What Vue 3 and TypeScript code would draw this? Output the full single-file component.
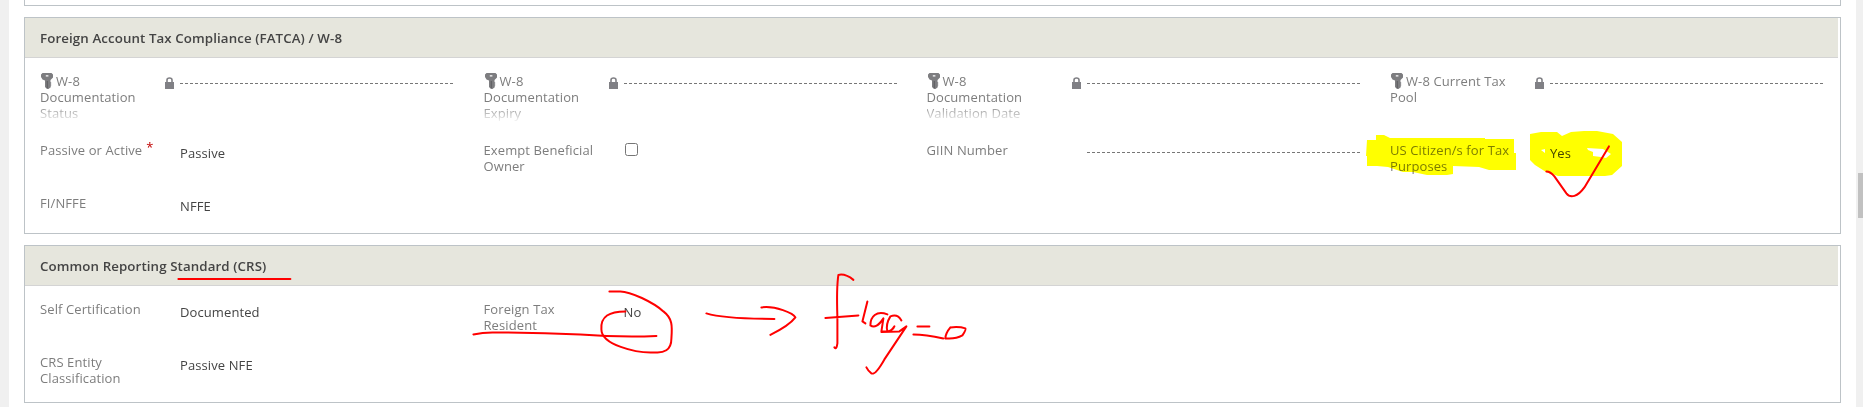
<script setup lang="ts">
interface Field {
  label: string[]
  value?: string
  kind: 'text' | 'empty' | 'checkbox'
  secured?: boolean
  required?: boolean
}
interface Section {
  title: string
  rows: (Field | null)[][]
}

const sections: Section[] = [
  {
    title: 'Foreign Account Tax Compliance (FATCA) / W-8',
    rows: [
      [
        { label: ['W-8', 'Documentation', 'Status'], kind: 'empty', secured: true },
        { label: ['W-8', 'Documentation', 'Expiry'], kind: 'empty', secured: true },
        { label: ['W-8', 'Documentation', 'Validation Date'], kind: 'empty', secured: true },
        { label: ['W-8 Current Tax', 'Pool'], kind: 'empty', secured: true },
      ],
      [
        { label: ['Passive or Active'], kind: 'text', value: 'Passive', required: true },
        { label: ['Exempt Beneficial', 'Owner'], kind: 'checkbox' },
        { label: ['GIIN Number'], kind: 'empty' },
        { label: ['US Citizen/s for Tax', 'Purposes'], kind: 'text', value: 'Yes' },
      ],
      [{ label: ['FI/NFFE'], kind: 'text', value: 'NFFE' }, null, null, null],
    ],
  },
  {
    title: 'Common Reporting Standard (CRS)',
    rows: [
      [
        { label: ['Self Certification'], kind: 'text', value: 'Documented' },
        { label: ['Foreign Tax', 'Resident'], kind: 'text', value: 'No' },
        null,
        null,
      ],
      [{ label: ['CRS Entity', 'Classification'], kind: 'text', value: 'Passive NFE' }, null, null, null],
    ],
  },
]
</script>

<template>
  <div class="page">
    <div class="gutter"></div>
    <main class="form">
      <div class="previous"></div>
      <section v-for="s in sections" :key="s.title" class="section">
        <h2 class="title"><span>{{ s.title }}</span></h2>
        <div class="rows">
          <div v-for="(row, r) in s.rows" :key="r" class="row" :class="{ tall: row[0]?.secured }">
            <div v-for="(f, c) in row" :key="c" class="cell" :class="{ wide: c > 1 }">
              <template v-if="f">
                <div class="label" :class="{ faded: f.label.length > 2 }">
                  <div v-for="(line, i) in f.label" :key="i" class="line">
                    <svg v-if="f.secured && i === 0" class="key" viewBox="0 0 12 16">
                      <path fill-rule="evenodd" d="M1.5 0h9L12 1.5V4.5L9.5 7V9L10.5 10 9.5 11 10.5 12 9.5 13 10 14 7.5 16H6L4 14V7.5L1.5 6.5 0 4V1.5zM4.8 2.2v1.4h2.6V2.2z" fill="#7d7d80" />
                      <path d="M6.3 8v7" stroke="#606064" stroke-width="1.2" />
                    </svg><span>{{ line }}</span><span v-if="f.required" class="required">*</span>
                  </div>
                </div>
                <div class="lock-slot">
                  <svg v-if="f.secured" class="lock" viewBox="0 0 9 12">
                    <path d="M2 6V3Q2 1 4.5 1T7 3V6" fill="none" stroke="#808085" stroke-width="1.6" />
                    <rect y="5" width="9" height="7" fill="#808085" />
                  </svg>
                </div>
                <div class="value">
                  <div v-if="f.kind === 'empty'" class="dashes"></div>
                  <input v-else-if="f.kind === 'checkbox'" type="checkbox" class="check" />
                  <span v-else>{{ f.value }}</span>
                </div>
              </template>
            </div>
          </div>
        </div>
      </section>
    </main>
    <div class="scrollbar"><div class="thumb"></div></div>

    <svg class="highlighter" viewBox="0 0 1863 407">
      <path d="M1367 140h9v-5h8l6 3h95v1h29v14h2v17h-27l-10-3-26-1v8l-6 1h-20l-14-3h-10l-15-5-11-1h-10v-10h-1z" />
      <path fill-rule="evenodd" d="M1530 134l11-2h16l5 4 9-4 13-1h13l16 3 9 8v24l-10 9-7 1h-47l-12-4-11-7-5-5zM1541 150l4-1v4zM1587 148l16 1 8 5-5 4-5-1-8-1v-4l-5-2z" />
    </svg>
    <svg class="pen" viewBox="0 0 1863 407">
      <g transform="translate(.4 .4)">
        <path d="M1546 171Q1550 171 1554 176L1566 193Q1569 197 1574 195.500Q1579 194 1584 187L1608.500 146" />
        <path d="M178 278.500H290" />
        <path d="M473 334Q482 332 492 332Q538 332 580 334Q620 337 656 335.500" />
        <path d="M609 291H620C630 291 653 302 663 311C672 318 672 325 671 338C671 350 663 353 654 352C635 353 601 344 601 329C600 316 609 311 625 311" />
        <path d="M706 313Q724 318.500 774 318.500M761 307C775 305 793 313 795 317Q789 325 770 334.500" />
        <path d="M853 279.500Q845 273 838 274.500Q836 287 837 317V343Q836 350 834 347M825 317.500L858 315" />
        <path d="M867 301L862 321L865 323M887 314C876 310 870 316 870 325Q876 329 883 318L881 331Q889 332 893 328M901 320Q897 313 890 316Q885 324 887 331Q890 332 894 326M881 331.500L899 331L906 326L884 359Q875 375 871 373Q868 371 866 367" />
        <path d="M917 326H929M913 334Q925 334 943 338M950 327Q945 333 945 338Q955 339 962 335Q966 329 965 328Q959 326 950 327" />
      </g>
    </svg>
  </div>
</template>

<style>
body { margin: 0; }
</style>

<style scoped>
.page {
  position: relative;
  display: flex;
  width: 1863px;
  height: 407px;
  overflow: hidden;
  background: #fff;
  font-family: "Open Sans", "Noto Sans", sans-serif;
  font-size: 13px;
  line-height: 16px;
  letter-spacing: 0.1px;
  color: #444;
}
.gutter { width: 9px; background: #f0f0f0; }
.form { flex: 1; padding: 0 15px; }
.previous { height: 5px; border: 1px solid #bdc3c7; border-top: 0; }
.section { margin-top: 11px; border: 1px solid #bdc3c7; }
.title {
  display: flex;
  align-items: center;
  box-sizing: border-box;
  height: 40px;
  margin: 0 2px 0 0;
  padding: 1px 0 0 15px;
  background: #e6e6dd;
  border-bottom: 1px solid #d4d4d4;
  font-size: 13.3px;
  font-weight: 600;
}
.rows { box-sizing: border-box; height: 175px; padding-top: 15px; }
.row { display: grid; grid-template-columns: 443.5px 443px 463.5px 1fr; height: 53px; padding-left: 15px; }
.row.tall { height: 69px; }
.row:last-child { height: 38px; }
.section:last-child .rows { height: 116px; }
.cell { display: grid; grid-template-columns: 125px 15px 273px; }
.cell.wide { grid-template-columns: 145px 15px 273px; }
.label { color: #7d7d7d; white-space: nowrap; }
.faded {
  height: 48px;
  -webkit-mask-image: linear-gradient(#000 31px, transparent 50px);
  mask-image: linear-gradient(#000 31px, transparent 50px);
}
.line { display: flex; height: 16px; }
.key { width: 12px; height: 16px; margin: 0 3px 0 1px; }
.required { margin: -3px 0 0 4px; color: #c00000; font-size: 13px; }
.lock { display: block; width: 9px; height: 12px; margin-top: 4px; }
.value { padding-top: 3px; }
.dashes {
  height: 1px;
  margin-top: 7px;
  background: repeating-linear-gradient(90deg, #777 0 3px, transparent 3px 5px);
}
.check { display: block; width: 13px; height: 13px; margin: -2px 0 0 1px; }
.scrollbar { width: 7px; background: #f0f0f0; }
.thumb { width: 5px; height: 45px; margin: 173px 0 0 2px; background: #c1c1c1; }
.highlighter, .pen { position: absolute; left: 0; top: 0; width: 1863px; height: 407px; pointer-events: none; }
.highlighter { fill: #ff0; mix-blend-mode: multiply; }
.pen { fill: none; stroke: #f00; stroke-width: 2; stroke-linecap: round; stroke-linejoin: round; }
</style>
